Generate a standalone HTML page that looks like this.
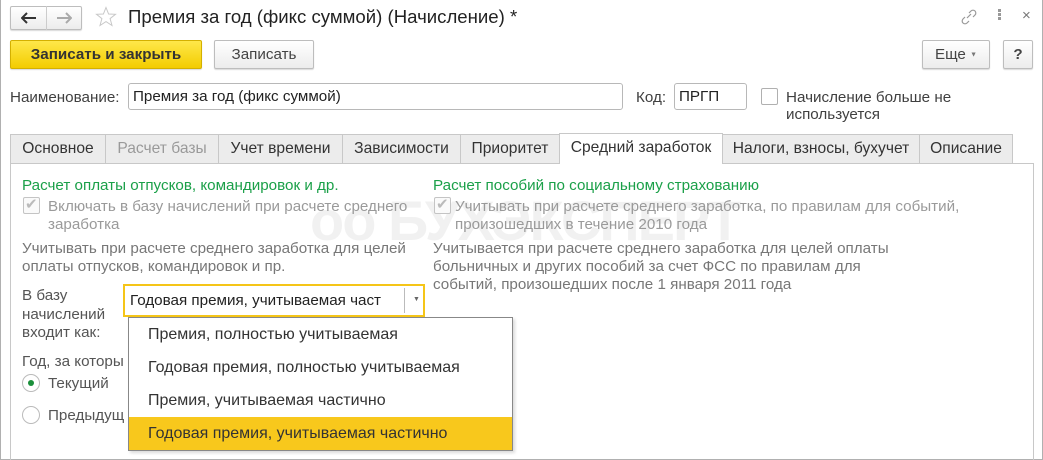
<!DOCTYPE html>
<html><head><meta charset="utf-8"><style>
*{box-sizing:border-box;margin:0;padding:0}
body{width:1043px;height:460px;overflow:hidden;background:#fff;font-family:"Liberation Sans",Arial,sans-serif;font-size:15.2px;color:#404040;position:relative}
.a{position:absolute;white-space:nowrap}
.btn{position:absolute;border:1px solid #bdbdbd;border-radius:2px;background:linear-gradient(#fff,#ececec);box-shadow:0 1px 1px rgba(0,0,0,.15);text-align:center;color:#444}
.inp{position:absolute;border:1px solid #b8b8b8;border-radius:3px;background:#fff;color:#222;padding-left:4px}
.tab{position:absolute;top:134px;height:29px;border:1px solid #c8c8c8;border-bottom:none;background:#ececec;line-height:28px;text-align:center;color:#333;font-size:15.6px}
.g{color:#9a9a9a}
.gr{color:#1ba049}
.cb{position:absolute;width:17px;height:17px;border:1px solid #c4c4c4;border-radius:2px;background:#fafafa}
</style></head><body>
<div style="position:absolute;left:0;top:0;width:1043px;height:460px;border:1px solid #b0b0b0;border-top:none"></div>
<div class="btn" style="left:10px;top:6px;width:72px;height:24px"></div>
<div style="position:absolute;left:46px;top:6px;width:1px;height:24px;background:#ccc"></div>
<svg class="a" style="left:21px;top:12px" width="16" height="12" viewBox="0 0 16 12"><path d="M1 6 H15 M6 1 L1 6 L6 11" fill="none" stroke="#333" stroke-width="2"/></svg>
<svg class="a" style="left:56px;top:12px" width="16" height="12" viewBox="0 0 16 12"><path d="M15 6 H1 M10 1 L15 6 L10 11" fill="none" stroke="#aaa" stroke-width="2"/></svg>
<svg class="a" style="left:95px;top:6px" width="22" height="22" viewBox="0 0 22 22"><path d="M11 1.5 L13.6 8 L20.5 8.3 L15.1 12.6 L17 19.5 L11 15.6 L5 19.5 L6.9 12.6 L1.5 8.3 L8.4 8 Z" fill="none" stroke="#c8c8c8" stroke-width="1"/></svg>
<div class="a" style="left:128px;top:6px;font-size:18.6px;color:#222">Премия за год (фикс суммой) (Начисление) *</div>
<svg class="a" style="left:960px;top:8px" width="18" height="18" viewBox="0 0 18 18" fill="none" stroke="#999" stroke-width="1.2"><path d="M7 10 L11 6 M9 5 L11 3 a2.5 2.5 0 0 1 4 4 L13 9 M9 13 L7 15 a2.5 2.5 0 0 1 -4 -4 L5 9"/></svg>
<div class="a" style="left:998px;top:9px;width:3px;height:3px;background:#999;box-shadow:0 4px 0 #999,0 8px 0 #999"></div>
<div class="a" style="left:1022px;top:7px;font-size:15px;color:#777">×</div>

<div class="btn" style="left:10px;top:40px;width:192px;height:29px;background:linear-gradient(#ffe84a,#f3cc00);border-color:#d4b000;font-weight:bold;color:#333;line-height:27px;font-size:15.2px">Записать и закрыть</div>
<div class="btn" style="left:214px;top:40px;width:100px;height:29px;line-height:27px">Записать</div>
<div class="btn" style="left:922px;top:40px;width:68px;height:29px;line-height:27px">Еще <span style="font-size:7px;color:#777;vertical-align:middle">▼</span></div>
<div class="btn" style="left:1003px;top:40px;width:30px;height:29px;line-height:27px;font-weight:bold">?</div>

<div class="a" style="left:10px;top:89px">Наименование:</div>
<div class="inp" style="left:128px;top:83px;width:495px;height:27px;line-height:25px">Премия за год (фикс суммой)</div>
<div class="a" style="left:636px;top:89px">Код:</div>
<div class="inp" style="left:674px;top:83px;width:73px;height:27px;line-height:25px">ПРГП</div>
<div class="cb" style="left:761px;top:88px;background:#fff;border-color:#b0b0b0"></div>
<div class="a" style="left:786px;top:89px;line-height:17px">Начисление больше не<br>используется</div>

<div class="tab" style="left:10px;width:96px">Основное</div>
<div class="tab g" style="left:105px;width:114px">Расчет базы</div>
<div class="tab" style="left:218px;width:125px">Учет времени</div>
<div class="tab" style="left:342px;width:119px">Зависимости</div>
<div class="tab" style="left:460px;width:100px">Приоритет</div>
<div class="tab" style="left:722px;width:198px">Налоги, взносы, бухучет</div>
<div class="tab" style="left:919px;width:94px">Описание</div>
<div style="position:absolute;left:10px;top:163px;width:1024px;height:297px;border:1px solid #c8c8c8;border-bottom:none"></div>
<div class="tab" style="left:559px;top:133px;width:164px;height:31px;background:#fff;z-index:2">Средний заработок</div>

<div class="a" style="left:310px;top:188px;font-size:56px;font-weight:bold;color:#000;opacity:.05;letter-spacing:-2px">оо БУХЭКСПЕРТ</div>

<div class="a gr" style="left:22px;top:177px">Расчет оплаты отпусков, командировок и др.</div>
<div class="cb" style="left:23px;top:197px"></div><div class="a" style="left:25px;top:195px;color:#bbb;font-size:15px">✔</div>
<div class="a g" style="left:48px;top:198px;line-height:18px">Включать в базу начислений при расчете среднего<br>заработка</div>
<div class="a" style="left:22px;top:240px;line-height:18px;color:#777">Учитывать при расчете среднего заработка для целей<br>оплаты отпусков, командировок и пр.</div>
<div class="a" style="left:22px;top:287px;line-height:18.5px;color:#555">В базу<br>начислений<br>входит как:</div>
<div style="position:absolute;left:123px;top:284px;width:302px;height:33px;border:2px solid #f5c518;background:#fff"></div>
<div class="a" style="left:130px;top:292px;color:#222">Годовая премия, учитываемая част</div>
<div style="position:absolute;left:404px;top:288px;width:1px;height:25px;background:#bbb"></div>
<div class="a" style="left:413px;top:296px;font-size:7px;color:#666">▼</div>
<div class="a" style="left:22px;top:353px;color:#555">Год, за которы</div>
<div style="position:absolute;left:22px;top:374px;width:18px;height:18px;border:1px solid #bbb;border-radius:50%"></div>
<div style="position:absolute;left:28px;top:380px;width:6px;height:6px;background:#1a8f3a;border-radius:50%"></div>
<div class="a" style="left:48px;top:375px;color:#555">Текущий</div>
<div style="position:absolute;left:22px;top:406px;width:18px;height:18px;border:1px solid #bbb;border-radius:50%"></div>
<div class="a" style="left:48px;top:407px;color:#555">Предыдущ</div>

<div class="a gr" style="left:433px;top:177px">Расчет пособий по социальному страхованию</div>
<div class="cb" style="left:434px;top:197px"></div><div class="a" style="left:436px;top:195px;color:#bbb;font-size:15px">✔</div>
<div class="a g" style="left:455px;top:198px;line-height:18px">Учитывать при расчете среднего заработка, по правилам для событий,<br>произошедших в течение 2010 года</div>
<div class="a" style="left:433px;top:240px;line-height:18px;color:#777">Учитывается при расчете среднего заработка для целей оплаты<br>больничных и других пособий за счет ФСС по правилам для<br>событий, произошедших после 1 января 2011 года</div>

<div style="position:absolute;left:128px;top:317px;width:385px;height:134px;border:1px solid #888;background:#fff;box-shadow:2px 2px 3px rgba(0,0,0,.15)">
<div style="position:absolute;left:0;top:99px;width:383px;height:33px;background:#f8c81c"></div>
<div class="a" style="left:19px;top:8px;color:#333;font-size:16px">Премия, полностью учитываемая</div>
<div class="a" style="left:19px;top:41px;color:#333;font-size:16px">Годовая премия, полностью учитываемая</div>
<div class="a" style="left:19px;top:74px;color:#333;font-size:16px">Премия, учитываемая частично</div>
<div class="a" style="left:19px;top:107px;color:#333;font-size:16px">Годовая премия, учитываемая частично</div>
</div>
</body></html>
